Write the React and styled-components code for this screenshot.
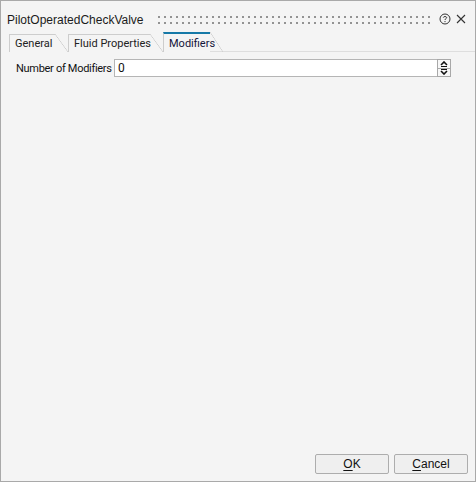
import React from "react";
import styled, { createGlobalStyle } from "styled-components";

const Global = createGlobalStyle`
  html, body { margin: 0; padding: 0; background: #f4f4f4; }
  * { box-sizing: border-box; }
`;

const Window = styled.div`
  width: 476px;
  height: 482px;
  border: 1px solid #a9a9a9;
  background: #f4f4f4;
  display: flex;
  flex-direction: column;
  font-family: Roboto, "Liberation Sans", Arial, sans-serif;
  font-size: 11px;
  color: #111;
`;

const TitleBar = styled.div`
  display: flex;
  align-items: center;
  height: 20px;
  margin-top: 9px;
  padding: 0 7px 0 6px;
`;

const Title = styled.div`
  font-family: "Liberation Sans", Arial, sans-serif;
  font-size: 12px;
  color: #1b1b1b;
  white-space: nowrap;
`;

const Grip = styled.div`
  flex: 1;
  height: 8px;
  margin: 0 6px 0 14px;
  background-image: conic-gradient(from 270deg at 2px 2px, #939393 25%, transparent 0);
  background-size: 6px 6px;
`;

const IconButton = styled.div`
  width: 14px;
  height: 14px;
  display: flex;
  align-items: center;
  justify-content: center;
  margin-top: -3px;
  margin-left: ${(p) => p.gap || 0}px;
`;

const TabStrip = styled.div`
  display: flex;
  align-items: flex-end;
  height: 22px;
  padding-left: 8px;
`;

const Tab = styled.div`
  position: relative;
  width: ${(p) => p.w}px;
  height: ${(p) => (p.active ? 20 : 18)}px;
  margin-right: 13px;
  padding-left: 5px;
  display: flex;
  align-items: center;
  border-left: 1px solid #cdcdcd;
  border-top: ${(p) => (p.active ? "2px solid #1679a7" : "1px solid #cdcdcd")};
  color: ${(p) => (p.active ? "#15153a" : "#222")};
  white-space: nowrap;
  &::after {
    content: "";
    position: absolute;
    top: ${(p) => (p.active ? -2 : -1)}px;
    right: -13px;
    width: 13px;
    height: calc(100% + ${(p) => (p.active ? 2 : 1)}px);
    background: linear-gradient(
      to top right,
      transparent calc(50% - 0.6px),
      #cdcdcd 50%,
      transparent calc(50% + 0.6px)
    );
  }
`;

const TabLine = styled.div`
  flex: 1;
  align-self: stretch;
  border-bottom: 1px solid #dedede;
  margin-left: -13px;
`;

const Row = styled.div`
  display: flex;
  align-items: center;
  margin-top: 7px;
  padding: 0 24px 0 15px;
`;

const Label = styled.div`
  width: 98px;
  flex: none;
  white-space: nowrap;
  letter-spacing: -0.3px;
`;

const Input = styled.div`
  flex: 1;
  height: 18px;
  background: #fff;
  border: 1px solid #b5b5b5;
  padding-left: 3px;
  display: flex;
  align-items: center;
  font-size: 12px;
`;

const Spinner = styled.div`
  width: 14px;
  height: 18px;
  display: flex;
  flex-direction: column;
  margin-left: -1px;
`;

const SpinPart = styled.div`
  flex: 1;
  border: 1px solid #a8a8a8;
  margin-top: ${(p) => (p.down ? -1 : 0)}px;
  background: #f7f7f7;
  display: flex;
  align-items: center;
  justify-content: center;
`;

const Body = styled.div`
  flex: 1;
`;

const Footer = styled.div`
  display: flex;
  justify-content: flex-end;
  gap: 5px;
  padding: 0 7px 7px 0;
`;

const Button = styled.button`
  width: 74px;
  height: 20px;
  border: 1px solid #adadad;
  border-radius: 2px;
  background: #efefef;
  font-family: "Liberation Sans", Arial, sans-serif;
  font-size: 12px;
  color: #111;
  padding: 0;
  u { text-decoration: underline; text-underline-offset: 2px; }
`;

const HelpIcon = () => (
  <svg width="12" height="12" viewBox="0 0 12 12">
    <circle cx="6" cy="6" r="5" fill="none" stroke="#333" strokeWidth="1" />
    <path d="M4.3 4.6 C4.3 3.2 7.7 3.2 7.7 4.6 C7.7 5.7 6 5.6 6 7" fill="none" stroke="#333" strokeWidth="1" />
    <circle cx="6" cy="8.6" r="0.65" fill="#333" />
  </svg>
);

const CloseIcon = () => (
  <svg width="10" height="10" viewBox="0 0 10 10">
    <path d="M1 1 L9 9 M9 1 L1 9" stroke="#333" strokeWidth="1.1" />
  </svg>
);

const Arrow = ({ down }) => (
  <svg width="8" height="6" viewBox="0 0 8 6">
    {down ? (
      <>
        <path d="M1 0.5 H7" stroke="#111" strokeWidth="1" />
        <path d="M1 2 L4 5 L7 2" fill="none" stroke="#111" strokeWidth="1.6" />
      </>
    ) : (
      <>
        <path d="M1 4 L4 1 L7 4" fill="none" stroke="#111" strokeWidth="1.6" />
        <path d="M1 5.5 H7" stroke="#111" strokeWidth="1" />
      </>
    )}
  </svg>
);

const tabs = [
  { name: "General", w: 46 },
  { name: "Fluid Properties", w: 82 },
  { name: "Modifiers", w: 47, active: true },
];

export default function App() {
  return (
    <>
      <Global />
      <Window>
        <TitleBar>
          <Title>PilotOperatedCheckValve</Title>
          <Grip />
          <IconButton>
            <HelpIcon />
          </IconButton>
          <IconButton gap={2}>
            <CloseIcon />
          </IconButton>
        </TitleBar>
        <TabStrip>
          {tabs.map((t) => (
            <Tab key={t.name} w={t.w} active={t.active}>
              {t.name}
            </Tab>
          ))}
          <TabLine />
        </TabStrip>
        <Row>
          <Label>Number of Modifiers</Label>
          <Input>0</Input>
          <Spinner>
            <SpinPart>
              <Arrow />
            </SpinPart>
            <SpinPart down>
              <Arrow down />
            </SpinPart>
          </Spinner>
        </Row>
        <Body />
        <Footer>
          <Button>
            <u>O</u>K
          </Button>
          <Button>
            <u>C</u>ancel
          </Button>
        </Footer>
      </Window>
    </>
  );
}
